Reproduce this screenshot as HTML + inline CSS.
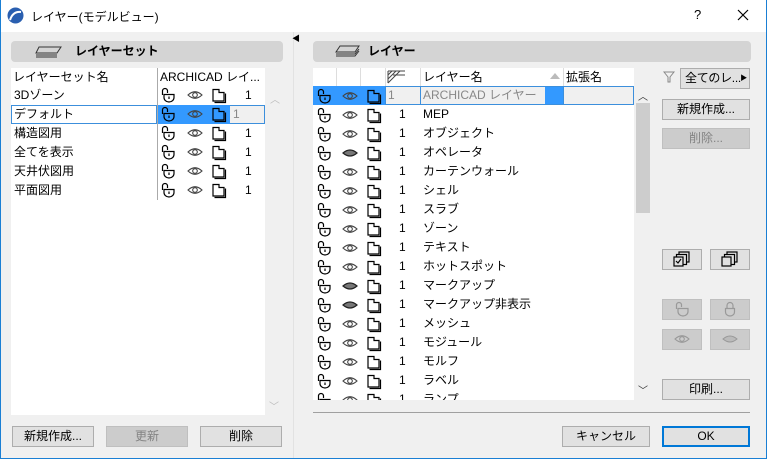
<!DOCTYPE html>
<html><head><meta charset="utf-8"><style>
*{box-sizing:border-box;margin:0;padding:0}
body{width:767px;height:459px;overflow:hidden;background:#f0f0f0;font-family:"Liberation Sans","Noto Sans CJK JP",sans-serif;font-size:12px;color:#000;position:relative}
.a{position:absolute}
.win{position:absolute;left:0;top:0;width:767px;height:459px;border:1px solid #1a7fd4;border-top:none}
.title{position:absolute;left:0;top:0;width:767px;height:32px;background:#fff}
.hbar{position:absolute;background:#d4d4d4;border-radius:4px;height:21px;font-weight:bold;font-size:12px;line-height:21px}
.btn{position:absolute;height:21px;background:#e1e1e1;border:1px solid #adadad;text-align:center;line-height:19px;font-size:12px}
.dis{background:#cccccc;border-color:#bfbfbf;color:#838383}
.row{position:absolute;height:19px;line-height:19px;white-space:nowrap}
</style></head><body>
<svg width="0" height="0" style="position:absolute">
<defs>
<g id="lk" fill="none" stroke="#000" stroke-width="1.2"><path d="M2.5 8 V4 a2.5 2.5 0 0 1 5 0 V6"/><path d="M4 7.5 H14 V10.5 a5 4.5 0 0 1 -10 0 Z"/><path d="M9 9.5 V12"/></g>
<g id="ey" fill="none" stroke="#444" stroke-width="1.1"><path d="M1 8 Q8 1.5 15 8 Q8 14.5 1 8Z"/><circle cx="8" cy="8" r="2.3"/></g>
<g id="ec"><path d="M1 8 Q8 2 15 8 Q8 14 1 8Z" fill="#777" stroke="#222" stroke-width="1.2"/></g>
<g id="fl" fill="none" stroke="#000" stroke-width="1.2"><path d="M2 2.5 H8 V5.5 H13 V14 H2 Z"/><path d="M14.5 6.5 V15.5 H3.5"/></g>
</defs></svg>
<div class="title"></div>
<svg class="a" style="left:7px;top:7px" width="17" height="17"><circle cx="8.5" cy="8.5" r="8" fill="#2a5fb0"/><path d="M3 13 Q6 4 14 5" stroke="#fff" stroke-width="2" fill="none"/></svg>
<div class="a" style="left:31px;top:8px;font-size:12px">レイヤー(モデルビュー)</div>
<div class="a" style="left:694px;top:7px;font-size:13px">?</div>
<svg class="a" style="left:737px;top:9px" width="12" height="12"><path d="M1 1 L11 11 M11 1 L1 11" stroke="#000" stroke-width="1.2"/></svg>
<div class="a" style="left:293px;top:32px;width:1px;height:426px;background:#e2e2e2"></div>
<div class="a" style="left:292px;top:33px;font-size:8px">◀</div>

<!-- left -->
<div class="hbar" style="left:11px;top:41px;width:272px"><svg class="a" style="left:24px;top:3px" width="28" height="16"><g fill="none" stroke="#333" stroke-width="1"><path d="M4 3 H26 L22 9 H1 Z"/><path d="M1 11 H22 M1 13 H22"/></g></svg><span style="position:absolute;left:64px">レイヤーセット</span></div>
<div class="a" style="left:11px;top:68px;width:254px;height:347px;background:#fff"></div>
<div class="a" style="left:157px;top:68px;width:1px;height:132px;background:#aaa"></div>
<div class="row" style="left:13px;top:68px">レイヤーセット名</div>
<div class="row" style="left:160px;top:68px">ARCHICAD レイ...</div>
<div class="a" style="left:270px;top:91px;color:#bbb;font-size:10px">︿</div>
<div class="a" style="left:269px;top:398px;color:#bbb;font-size:10px">﹀</div>
<div class="a" style="left:11px;top:105px;width:146px;height:19px;border:1px solid #3c8fdc"></div>
<div class="a" style="left:158px;top:105px;width:72px;height:19px;background:#3399ff"></div>
<div class="a" style="left:230px;top:105px;width:35px;height:19px;background:#f0f0f0;border:1px solid #3c8fdc;border-left:none"></div>
<div class="row" style="left:14px;top:86px">3Dゾーン</div>
<div class="row" style="left:14px;top:105px">デフォルト</div>
<div class="row" style="left:14px;top:124px">構造図用</div>
<div class="row" style="left:14px;top:143px">全てを表示</div>
<div class="row" style="left:14px;top:162px">天井伏図用</div>
<div class="row" style="left:14px;top:181px">平面図用</div>
<div class="row" style="left:245px;top:86px">1</div>
<div class="row" style="left:233px;top:105px;color:#888">1</div>
<div class="row" style="left:245px;top:124px">1</div>
<div class="row" style="left:245px;top:143px">1</div>
<div class="row" style="left:245px;top:162px">1</div>
<div class="row" style="left:245px;top:181px">1</div>
<svg class="a" style="left:160px;top:87px" width="70" height="114">
<g><use href="#lk"/><use href="#ey" x="27"/><use href="#fl" x="51"/></g>
<g transform="translate(0,19)"><use href="#lk"/><use href="#ey" x="27"/><use href="#fl" x="51"/></g>
<g transform="translate(0,38)"><use href="#lk"/><use href="#ey" x="27"/><use href="#fl" x="51"/></g>
<g transform="translate(0,57)"><use href="#lk"/><use href="#ey" x="27"/><use href="#fl" x="51"/></g>
<g transform="translate(0,76)"><use href="#lk"/><use href="#ey" x="27"/><use href="#fl" x="51"/></g>
<g transform="translate(0,95)"><use href="#lk"/><use href="#ey" x="27"/><use href="#fl" x="51"/></g>
</svg>
<div class="btn" style="left:12px;top:426px;width:82px">新規作成...</div>
<div class="btn dis" style="left:106px;top:426px;width:82px">更新</div>
<div class="btn" style="left:200px;top:426px;width:82px">削除</div>

<!-- right -->
<div class="hbar" style="left:313px;top:41px;width:438px"><svg class="a" style="left:22px;top:3px" width="26" height="16"><g fill="none" stroke="#333" stroke-width="1"><path d="M5 2 H24 L20 8 H1 Z"/><path d="M1 10 H20 L24 5 M1 12 H20 L24 7"/></g></svg><span style="position:absolute;left:55px">レイヤー</span></div>
<div class="a" style="left:313px;top:68px;width:321px;height:332px;background:#fff;overflow:hidden">
<div class="a" style="left:23px;top:0;width:1px;height:18px;background:#ddd"></div>
<div class="a" style="left:47px;top:0;width:1px;height:18px;background:#ddd"></div>
<div class="a" style="left:72px;top:0;width:1px;height:18px;background:#ddd"></div>
<div class="a" style="left:107px;top:0;width:1px;height:18px;background:#ddd"></div>
<div class="a" style="left:250px;top:0;width:1px;height:18px;background:#ddd"></div>
<svg class="a" style="left:74px;top:2px" width="20" height="14"><path d="M1 1 H18 M1 1 V13 M1 5 L5 1 M1 9 L9 1 M1 13 L13 1 M6 5 H18" stroke="#444" fill="none"/></svg>
<div class="row" style="left:110px;top:0">レイヤー名</div>
<div class="a" style="left:237px;top:5px;width:0;height:0;border-left:5px solid transparent;border-right:5px solid transparent;border-bottom:6px solid #bbb"></div>
<div class="row" style="left:253px;top:0">拡張名</div>
<div class="a" style="left:0;top:18px;width:72px;height:19px;background:#3399ff"></div>
<div class="a" style="left:72px;top:18px;width:249px;height:19px;background:#f0f0f0;border:1px solid #3c8fdc"></div>
<div class="a" style="left:232px;top:19px;width:18px;height:17px;background:#3399ff"></div>
<div class="a" style="left:107px;top:19px;width:1px;height:17px;background:#3c8fdc"></div>
<div class="a" style="left:250px;top:19px;width:1px;height:17px;background:#3c8fdc"></div>
<div class="row" style="left:75px;top:18px;color:#888">1</div>
<div class="row" style="left:110px;top:18px;color:#888">ARCHICAD レイヤー</div>
<svg class="a" style="left:3px;top:20px" width="70" height="320">
<g><use href="#lk"/><use href="#ey" x="26"/><use href="#fl" x="50"/></g>
<g transform="translate(0,19)"><use href="#lk"/><use href="#ey" x="26"/><use href="#fl" x="50"/></g>
<g transform="translate(0,38)"><use href="#lk"/><use href="#ey" x="26"/><use href="#fl" x="50"/></g>
<g transform="translate(0,57)"><use href="#lk"/><use href="#ec" x="26"/><use href="#fl" x="50"/></g>
<g transform="translate(0,76)"><use href="#lk"/><use href="#ey" x="26"/><use href="#fl" x="50"/></g>
<g transform="translate(0,95)"><use href="#lk"/><use href="#ey" x="26"/><use href="#fl" x="50"/></g>
<g transform="translate(0,114)"><use href="#lk"/><use href="#ey" x="26"/><use href="#fl" x="50"/></g>
<g transform="translate(0,133)"><use href="#lk"/><use href="#ey" x="26"/><use href="#fl" x="50"/></g>
<g transform="translate(0,152)"><use href="#lk"/><use href="#ey" x="26"/><use href="#fl" x="50"/></g>
<g transform="translate(0,171)"><use href="#lk"/><use href="#ey" x="26"/><use href="#fl" x="50"/></g>
<g transform="translate(0,190)"><use href="#lk"/><use href="#ec" x="26"/><use href="#fl" x="50"/></g>
<g transform="translate(0,209)"><use href="#lk"/><use href="#ec" x="26"/><use href="#fl" x="50"/></g>
<g transform="translate(0,228)"><use href="#lk"/><use href="#ey" x="26"/><use href="#fl" x="50"/></g>
<g transform="translate(0,247)"><use href="#lk"/><use href="#ey" x="26"/><use href="#fl" x="50"/></g>
<g transform="translate(0,266)"><use href="#lk"/><use href="#ey" x="26"/><use href="#fl" x="50"/></g>
<g transform="translate(0,285)"><use href="#lk"/><use href="#ey" x="26"/><use href="#fl" x="50"/></g>
<g transform="translate(0,304)"><use href="#lk"/><use href="#ey" x="26"/><use href="#fl" x="50"/></g>
</svg>
<div class="row" style="left:86px;top:37px">1</div><div class="row" style="left:110px;top:37px">MEP</div>
<div class="row" style="left:86px;top:56px">1</div><div class="row" style="left:110px;top:56px">オブジェクト</div>
<div class="row" style="left:86px;top:75px">1</div><div class="row" style="left:110px;top:75px">オペレータ</div>
<div class="row" style="left:86px;top:94px">1</div><div class="row" style="left:110px;top:94px">カーテンウォール</div>
<div class="row" style="left:86px;top:113px">1</div><div class="row" style="left:110px;top:113px">シェル</div>
<div class="row" style="left:86px;top:132px">1</div><div class="row" style="left:110px;top:132px">スラブ</div>
<div class="row" style="left:86px;top:151px">1</div><div class="row" style="left:110px;top:151px">ゾーン</div>
<div class="row" style="left:86px;top:170px">1</div><div class="row" style="left:110px;top:170px">テキスト</div>
<div class="row" style="left:86px;top:189px">1</div><div class="row" style="left:110px;top:189px">ホットスポット</div>
<div class="row" style="left:86px;top:208px">1</div><div class="row" style="left:110px;top:208px">マークアップ</div>
<div class="row" style="left:86px;top:227px">1</div><div class="row" style="left:110px;top:227px">マークアップ非表示</div>
<div class="row" style="left:86px;top:246px">1</div><div class="row" style="left:110px;top:246px">メッシュ</div>
<div class="row" style="left:86px;top:265px">1</div><div class="row" style="left:110px;top:265px">モジュール</div>
<div class="row" style="left:86px;top:284px">1</div><div class="row" style="left:110px;top:284px">モルフ</div>
<div class="row" style="left:86px;top:303px">1</div><div class="row" style="left:110px;top:303px">ラベル</div>
<div class="row" style="left:86px;top:322px">1</div><div class="row" style="left:110px;top:322px">ランプ</div>
</div>
<div class="a" style="left:636px;top:103px;width:14px;height:110px;background:#cdcdcd"></div>
<div class="a" style="left:638px;top:88px;font-size:10px;color:#333">︿</div>
<div class="a" style="left:638px;top:382px;font-size:10px;color:#333">﹀</div>

<svg class="a" style="left:663px;top:70px" width="12" height="14"><path d="M1 2 H11 L7 7 V12 H5 V7 Z" fill="none" stroke="#888"/></svg>
<div class="btn" style="left:680px;top:68px;width:70px;text-align:left;padding-left:4px;letter-spacing:-0.3px">全てのレ...<span style="position:absolute;right:2px;top:0;font-size:7px">▶</span></div>
<div class="btn" style="left:662px;top:99px;width:88px">新規作成...</div>
<div class="btn dis" style="left:662px;top:128px;width:88px">削除...</div>
<div class="btn" style="left:662px;top:249px;width:40px"><svg width="18" height="16" style="margin-top:1px"><g fill="none" stroke="#000" stroke-width="1.2"><rect x="6" y="1" width="10" height="10"/><rect x="3.5" y="3.5" width="10" height="10" fill="#e1e1e1"/><rect x="1" y="6" width="9" height="9" fill="#e1e1e1"/><path d="M3 10 L5 12 L8 8"/></g></svg></div>
<div class="btn" style="left:710px;top:249px;width:40px"><svg width="18" height="16" style="margin-top:1px"><g fill="none" stroke="#000" stroke-width="1.2"><rect x="6" y="1" width="10" height="10"/><rect x="3.5" y="3.5" width="10" height="10" fill="#e1e1e1"/><rect x="1" y="6" width="9" height="9" fill="#e1e1e1"/></g></svg></div>
<div class="btn dis" style="left:662px;top:299px;width:40px"><svg width="16" height="16" style="margin-top:1px"><g fill="none" stroke="#999" stroke-width="1.2"><path d="M2.5 8 V4 a2.5 2.5 0 0 1 5 0 V6"/><path d="M4 7.5 H14 V10.5 a5 4.5 0 0 1 -10 0 Z"/></g></svg></div>
<div class="btn dis" style="left:710px;top:299px;width:40px"><svg width="16" height="16" style="margin-top:1px"><g fill="none" stroke="#999" stroke-width="1.2"><path d="M5 7 V4.5 a3 3 0 0 1 6 0 V7"/><path d="M3.5 7.5 H12.5 V11 a4.5 4 0 0 1 -9 0 Z"/></g></svg></div>
<div class="btn dis" style="left:662px;top:329px;width:40px"><svg width="16" height="16" style="margin-top:1px"><g fill="none" stroke="#999" stroke-width="1.1"><path d="M1 8 Q8 1.5 15 8 Q8 14.5 1 8Z"/><circle cx="8" cy="8" r="2.3"/></g></svg></div>
<div class="btn dis" style="left:710px;top:329px;width:40px"><svg width="16" height="16" style="margin-top:1px"><path d="M1 8 Q8 2 15 8 Q8 14 1 8Z" fill="#bbb" stroke="#999"/></svg></div>
<div class="btn" style="left:662px;top:379px;width:88px">印刷...</div>
<div class="a" style="left:313px;top:412px;width:437px;height:1px;background:#a0a0a0"></div>
<div class="btn" style="left:562px;top:426px;width:88px">キャンセル</div>
<div class="btn" style="left:662px;top:426px;width:88px;border:2px solid #0078d7;line-height:17px">OK</div>
<div class="win"></div>
</body></html>
